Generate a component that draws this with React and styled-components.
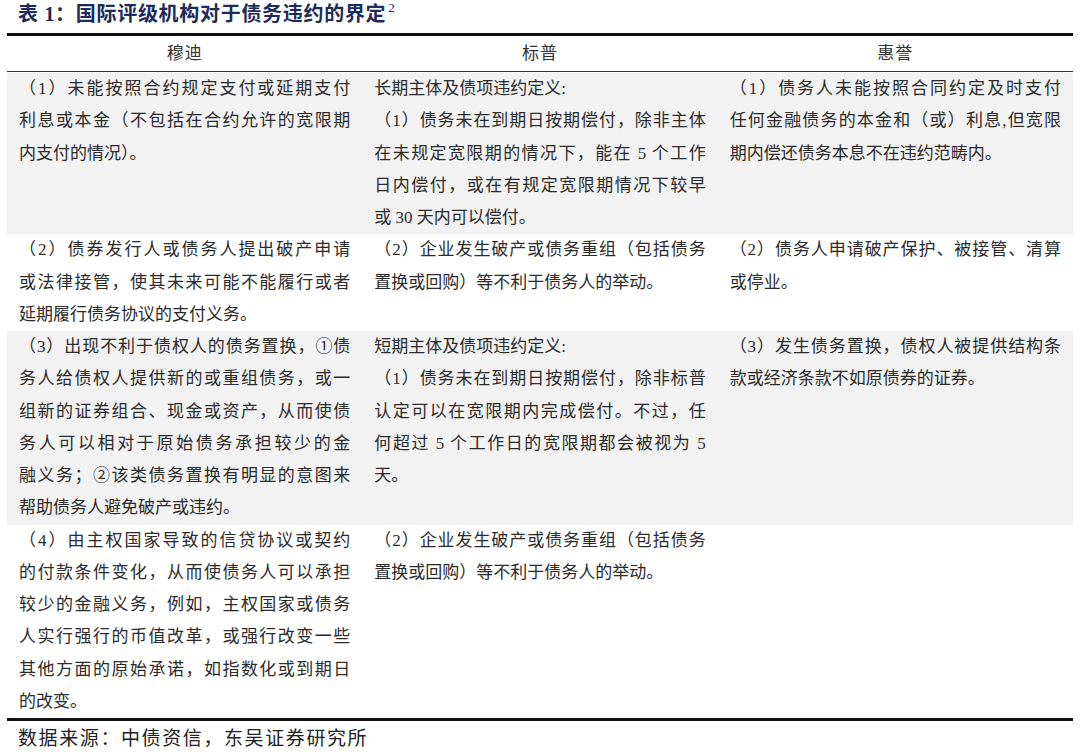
import React from 'react';
import styled, { createGlobalStyle } from 'styled-components';

const GlobalStyle = createGlobalStyle`
	html, body {
		margin: 0;
		padding: 0;
		background: #ffffff;
	}
	body {
		font-family: 'Liberation Serif', 'Noto Sans CJK SC', serif;
	}
`;

const Page = styled.div`
	width: 1080px;
	height: 755px;
	padding: 0 7px;
	box-sizing: border-box;
	overflow: hidden;
`;

const Title = styled.h1`
	margin: 0;
	padding: 0 0 5px 11px;
	height: 28px;
	line-height: 28px;
	font-size: 20px;
	font-weight: 700;
	letter-spacing: 0.7px;
	color: #1c2b5a;
	white-space: nowrap;
`;

const Sup = styled.sup`
	font-size: 13px;
	font-weight: 400;
	vertical-align: 9px;
	line-height: 0;
	margin-left: 2px;
`;

const Table = styled.div`
	border-top: 3px solid #111111;
	border-bottom: 3px solid #111111;
`;

const HeadRow = styled.div`
	display: grid;
	grid-template-columns: repeat(3, 1fr);
	height: 35px;
	border-bottom: 1px solid #333333;
	margin-bottom: 1px;
`;

const HeadCell = styled.div`
	text-align: center;
	line-height: 35px;
	font-size: 17px;
	letter-spacing: 1px;
	color: #333333;
`;

const Row = styled.div`
	display: grid;
	grid-template-columns: repeat(3, 1fr);
	background: ${(p) => (p.$shade ? '#f2f2f2' : '#ffffff')};
`;

const Cell = styled.div`
	padding: 0 12px;
	font-size: 17px;
	line-height: 32.25px;
	color: #2b2b2b;
`;

const Line = styled.div`
	white-space: nowrap;
	text-align: ${(p) => (p.$full ? 'justify' : 'left')};
	text-align-last: ${(p) => (p.$full ? 'justify' : 'left')};
	text-justify: inter-character;
`;

const Source = styled.div`
	padding-left: 11px;
	line-height: 36px;
	font-size: 19px;
	letter-spacing: 1.6px;
	color: #222222;
`;

const heads = ['穆迪', '标普', '惠誉'];

const rows = [
	{
		shade: true,
		cells: [
			[['（1）未能按照合约规定支付或延期支付', '利息或本金（不包括在合约允许的宽限期', '内支付的情况）。']],
			[
				['长期主体及债项违约定义:'],
				[
					'（1）债务未在到期日按期偿付，除非主体',
					'在未规定宽限期的情况下，能在 5 个工作',
					'日内偿付，或在有规定宽限期情况下较早',
					'或 30 天内可以偿付。',
				],
			],
			[['（1）债务人未能按照合同约定及时支付', '任何金融债务的本金和（或）利息,但宽限', '期内偿还债务本息不在违约范畴内。']],
		],
	},
	{
		shade: false,
		cells: [
			[['（2）债券发行人或债务人提出破产申请', '或法律接管，使其未来可能不能履行或者', '延期履行债务协议的支付义务。']],
			[['（2）企业发生破产或债务重组（包括债务', '置换或回购）等不利于债务人的举动。']],
			[['（2）债务人申请破产保护、被接管、清算', '或停业。']],
		],
	},
	{
		shade: true,
		cells: [
			[
				[
					'（3）出现不利于债权人的债务置换，①债',
					'务人给债权人提供新的或重组债务，或一',
					'组新的证券组合、现金或资产，从而使债',
					'务人可以相对于原始债务承担较少的金',
					'融义务；②该类债务置换有明显的意图来',
					'帮助债务人避免破产或违约。',
				],
			],
			[
				['短期主体及债项违约定义:'],
				[
					'（1）债务未在到期日按期偿付，除非标普',
					'认定可以在宽限期内完成偿付。不过，任',
					'何超过 5 个工作日的宽限期都会被视为 5',
					'天。',
				],
			],
			[['（3）发生债务置换，债权人被提供结构条', '款或经济条款不如原债券的证券。']],
		],
	},
	{
		shade: false,
		cells: [
			[
				[
					'（4）由主权国家导致的信贷协议或契约',
					'的付款条件变化，从而使债务人可以承担',
					'较少的金融义务，例如，主权国家或债务',
					'人实行强行的币值改革，或强行改变一些',
					'其他方面的原始承诺，如指数化或到期日',
					'的改变。',
				],
			],
			[['（2）企业发生破产或债务重组（包括债务', '置换或回购）等不利于债务人的举动。']],
			[],
		],
	},
];

const App = () => {
	return (
		<>
			<GlobalStyle />
			<Page>
				<Title>
					表 1：国际评级机构对于债务违约的界定<Sup>2</Sup>
				</Title>
				<Table>
					<HeadRow>
						{heads.map((h) => (
							<HeadCell key={h}>{h}</HeadCell>
						))}
					</HeadRow>
					{rows.map((row, i) => (
						<Row key={i} $shade={row.shade}>
							{row.cells.map((paras, j) => (
								<Cell key={j}>
									{paras.map((lines, k) =>
										lines.map((text, n) => (
											<Line key={k + '-' + n} $full={n < lines.length - 1}>
												{text}
											</Line>
										))
									)}
								</Cell>
							))}
						</Row>
					))}
				</Table>
				<Source>数据来源：中债资信，东吴证券研究所</Source>
			</Page>
		</>
	);
};

export default App;
